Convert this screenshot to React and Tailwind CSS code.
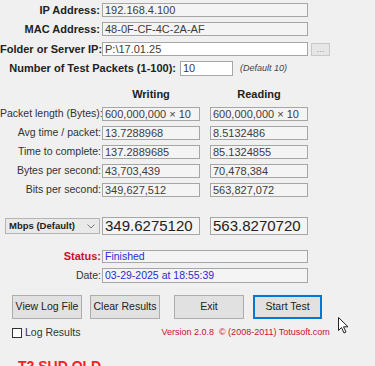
import React from 'react';

const Box = ({ children, className = '', color = 'text-[#3c3c3c]' }) => (
  <div className={`border border-[#a6a6a6] px-[2px] whitespace-nowrap overflow-hidden flex items-center ${color} ${className}`}>
    {children}
  </div>
);

const DataRow = ({ label, writing, reading }) => (
  <div className="flex h-[14px] items-center">
    <div className="w-[101px] text-right text-[10.5px] text-[#333] whitespace-nowrap">{label}</div>
    <Box className="ml-[1px] w-[98px] h-[14px] bg-[#f4f4f4] text-[11px]">{writing}</Box>
    <Box className="ml-[10px] w-[98px] h-[14px] bg-[#f4f4f4] text-[11px]">{reading}</Box>
  </div>
);

const Btn = ({ children, className = '' }) => (
  <button className={`h-[24px] bg-[#e1e1e1] text-[10.5px] text-[#222] ${className}`}>{children}</button>
);

export default function App() {
  return (
    <div
      className="relative w-[375px] h-[366px] overflow-hidden bg-[#f0f0f0] pt-[3px]"
      style={{ fontFamily: '"Liberation Sans", Arial, sans-serif' }}
    >
      {/* network info */}
      <div className="flex h-[14px] items-center">
        <div className="w-[100px] text-right text-[11px] font-bold text-[#222]">IP Address:</div>
        <Box className="ml-[2px] w-[206px] h-[14px] bg-[#f4f4f4] text-[11px]">192.168.4.100</Box>
      </div>
      <div className="mt-[5px] flex h-[14px] items-center">
        <div className="w-[100px] text-right text-[11px] font-bold text-[#222]">MAC Address:</div>
        <Box className="ml-[2px] w-[206px] h-[14px] bg-[#f4f4f4] text-[11px]">48-0F-CF-4C-2A-AF</Box>
      </div>
      <div className="mt-[6px] flex h-[14px] items-center">
        <div className="w-[100px] text-right text-[11px] font-bold text-[#222] whitespace-nowrap">Folder or Server IP:</div>
        <Box className="ml-[2px] w-[206px] h-[14px] bg-white text-[11px]">P:\17.01.25</Box>
        <div className="ml-[3px] w-[19px] h-[13px] border border-[#c8c8c8] bg-[#e6e6e6] text-[9px] text-[#999] flex items-center justify-center leading-none">...</div>
      </div>
      <div className="mt-[5px] flex h-[15px] items-center">
        <div className="w-[176px] text-right text-[11px] font-bold text-[#222] whitespace-nowrap">Number of Test Packets (1-100):</div>
        <Box className="ml-[4px] w-[53px] h-[15px] bg-white text-[11px]">10</Box>
        <div className="ml-[7px] text-[9px] italic text-[#444]">(Default 10)</div>
      </div>

      {/* column headers */}
      <div className="mt-[12px] flex h-[12px] items-center text-[11px] font-bold text-[#222]">
        <div className="ml-[102px] w-[98px] text-center">Writing</div>
        <div className="ml-[10px] w-[98px] text-center">Reading</div>
      </div>

      <div className="mt-[7px] flex flex-col gap-[5px]">
        <DataRow label="Packet length (Bytes):" writing="600,000,000 × 10" reading="600,000,000 × 10" />
        <DataRow label="Avg time / packet:" writing="13.7288968" reading="8.5132486" />
        <DataRow label="Time to complete:" writing="137.2889685" reading="85.1324855" />
        <DataRow label="Bytes per second:" writing="43,703,439" reading="70,478,384" />
        <DataRow label="Bits per second:" writing="349,627,512" reading="563,827,072" />
      </div>

      {/* unit + totals */}
      <div className="mt-[20px] flex h-[18px] items-center">
        <div className="ml-[5px] w-[95px] h-[16px] border border-[#b4b4b4] bg-[#e9e9e9] flex items-center justify-between pl-[3px] pr-[4px]">
          <span className="text-[9.5px] font-bold text-[#222]">Mbps (Default)</span>
          <svg width="8" height="5" viewBox="0 0 8 5" fill="none" stroke="#777" strokeWidth="1">
            <path d="M0.5 0.5 L4 4 L7.5 0.5" />
          </svg>
        </div>
        <Box className="ml-[2px] w-[98px] h-[18px] bg-[#f4f4f4] text-[15px]" color="text-[#222]">349.6275120</Box>
        <Box className="ml-[10px] w-[98px] h-[18px] bg-[#f4f4f4] text-[15px]" color="text-[#222]">563.8270720</Box>
      </div>

      {/* status */}
      <div className="mt-[15px] flex h-[13px] items-center">
        <div className="w-[101px] text-right text-[11px] font-bold text-[#c8102e]">Status:</div>
        <Box className="ml-[1px] w-[206px] h-[13px] bg-[#f4f4f4] text-[10.5px]" color="text-[#2b2bd0]">Finished</Box>
      </div>
      <div className="mt-[5px] flex h-[15px] items-center">
        <div className="w-[101px] text-right text-[10.5px] text-[#333]">Date:</div>
        <Box className="ml-[1px] w-[206px] h-[15px] bg-[#f4f4f4] text-[10.5px]" color="text-[#2b2bd0]">03-29-2025 at 18:55:39</Box>
      </div>

      {/* buttons */}
      <div className="mt-[12px] flex items-center">
        <Btn className="ml-[12px] w-[70px] border border-[#adadad]">View Log File</Btn>
        <Btn className="ml-[8px] w-[70px] border border-[#adadad]">Clear Results</Btn>
        <Btn className="ml-[14px] w-[70px] border border-[#adadad]">Exit</Btn>
        <Btn className="ml-[9px] w-[69px] border-2 border-[#0078d7]">Start Test</Btn>
      </div>

      <div className="mt-[8px] flex h-[12px] items-center">
        <div className="ml-[12px] w-[10px] h-[10px] border border-[#333] bg-white" />
        <span className="ml-[3px] text-[10.5px] text-[#333]">Log Results</span>
        <span className="ml-[81px] text-[9px] text-[#c8102e] whitespace-nowrap">Version 2.0.8&nbsp; © (2008-2011) Totusoft.com</span>
      </div>

      <div className="mt-[20px] ml-[18px] text-[14px] font-bold text-[#ff2020] leading-none">T2 SUD OLD</div>

      {/* mouse pointer */}
      <svg className="absolute left-[338px] top-[317px]" width="11" height="17" viewBox="0 0 11 17">
        <path d="M0.5 0.5 L0.5 13.5 L3.5 10.5 L6 16 L8 15 L5.5 9.8 L10 9.8 Z" fill="white" stroke="#222" strokeWidth="1" strokeLinejoin="round" />
      </svg>
    </div>
  );
}
